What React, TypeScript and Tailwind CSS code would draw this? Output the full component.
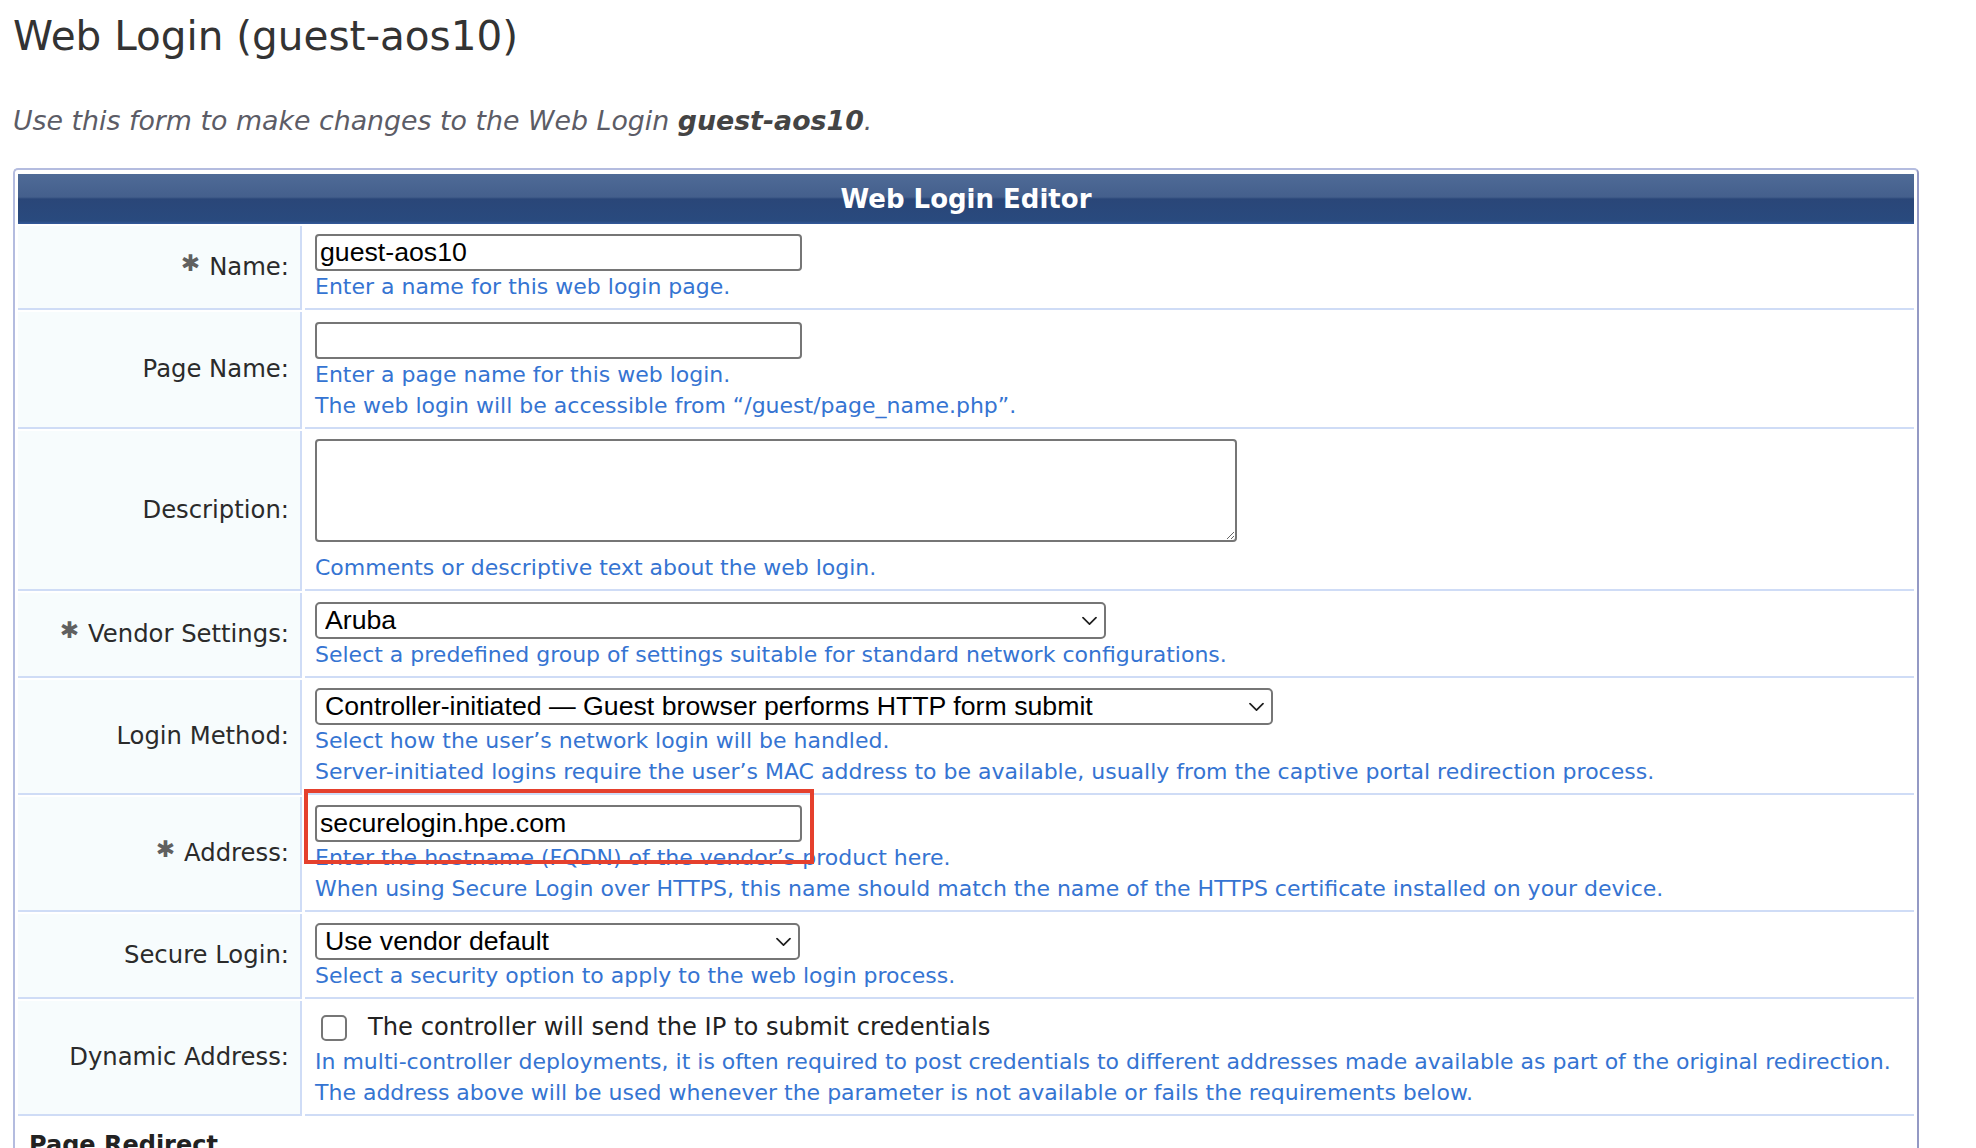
import React from "react";

const LABEL_FONT = "font-['DejaVu_Sans',Verdana,sans-serif]";
const INPUT_FONT = "font-['Liberation_Sans',Arial,sans-serif]";

const Chevron = () => (
  <svg
    className="pointer-events-none absolute right-[9px] top-1/2 -translate-y-1/2"
    width="15"
    height="9"
    viewBox="0 0 15 9"
    fill="none"
  >
    <path d="M1 1.2 L7.5 7.6 L14 1.2" stroke="#1f1f1f" strokeWidth="1.7" strokeLinecap="round" strokeLinejoin="round" />
  </svg>
);

const Select: React.FC<{ value: string; width: string }> = ({ value, width }) => (
  <div className={`relative ${width} h-[37px]`}>
    <select
      defaultValue={value}
      className={`appearance-none w-full h-full border-2 border-[#767676] rounded-[5px] bg-white pl-[8px] pr-[30px] text-[26.7px] leading-none text-black ${INPUT_FONT}`}
    >
      <option>{value}</option>
    </select>
    <Chevron />
  </div>
);

const TextInput: React.FC<{ value?: string }> = ({ value = "" }) => (
  <input
    type="text"
    defaultValue={value}
    className={`block w-[487px] h-[37px] border-2 border-[#767676] rounded-[4px] bg-white px-[3px] text-[26.7px] text-black ${INPUT_FONT}`}
  />
);

const Help: React.FC<{ children: React.ReactNode }> = ({ children }) => (
  <div className="text-[22px] leading-[31px] text-[#3574d2]">{children}</div>
);

const Row: React.FC<{
  label: string;
  required?: boolean;
  pt?: string;
  children: React.ReactNode;
  overlay?: React.ReactNode;
}> = ({ label, required, pt = "pt-[8px]", children, overlay }) => (
  <div className="flex gap-[3px]">
    <div className="w-[284px] shrink-0 flex items-center justify-end pr-[11px] bg-[#f7fcfd] border-r-2 border-b-2 border-[#cfdcf6] text-[24.3px] text-[#2b2b2b]">
      {required && <span className="text-[23px] leading-none text-[#606060] mr-[9px] relative top-[-4px]">✱</span>}
      <span>{label}:</span>
    </div>
    <div className={`relative flex-1 border-b-2 border-[#cfdcf6] pl-[10px] pb-[6px] ${pt}`}>
      {children}
      {overlay}
    </div>
  </div>
);

export default function App() {
  return (
    <div className={`min-h-screen bg-white pl-[13px] ${LABEL_FONT}`}>
      {/* Page heading */}
      <h1 className="mt-[12px] text-[40.5px] leading-[48px] text-[#333]">Web Login (guest-aos10)</h1>
      <p className="mt-[43px] text-[26.8px] leading-[36px] italic text-[#5c5c66]">
        Use this form to make changes to the Web Login <b className="font-bold text-[#444]">guest-aos10</b>.
      </p>

      {/* Editor panel */}
      <div className="mt-[29px] w-[1906px] border-2 border-[#b4bcdf] border-r-[#9499c4] rounded-t-[5px] px-[3px] pt-[4px]">
        <div className="h-[50px] flex items-center justify-center text-[26px] font-bold text-white bg-[linear-gradient(to_bottom,#4f6b97_0%,#445f8c_46%,#2a4678_50%,#294a7e_94%,#34599b_100%)]">
          Web Login Editor
        </div>

        <div className="mt-[2px] flex flex-col gap-[2px]">
          <Row label="Name" required>
            <TextInput value="guest-aos10" />
            <Help>Enter a name for this web login page.</Help>
          </Row>

          <Row label="Page Name" pt="pt-[10px]">
            <TextInput />
            <Help>Enter a page name for this web login.</Help>
            <Help>The web login will be accessible from “/guest/page_name.php”.</Help>
          </Row>

          <Row label="Description">
            <textarea className="block w-[922px] h-[103px] mb-[10px] border-2 border-[#767676] rounded-[4px] bg-white" />
            <Help>Comments or descriptive text about the web login.</Help>
          </Row>

          <Row label="Vendor Settings" required pt="pt-[9px]">
            <Select value="Aruba" width="w-[791px]" />
            <Help>Select a predefined group of settings suitable for standard network configurations.</Help>
          </Row>

          <Row label="Login Method">
            <Select value="Controller-initiated — Guest browser performs HTTP form submit" width="w-[958px]" />
            <Help>Select how the user’s network login will be handled.</Help>
            <Help>
              Server-initiated logins require the user’s MAC address to be available, usually from the captive portal
              redirection process.
            </Help>
          </Row>

          <Row
            label="Address"
            required
            overlay={<div className="absolute left-[-1px] top-[-8px] w-[510px] h-[75px] border-4 border-[#e5402d]" />}
          >
            <TextInput value="securelogin.hpe.com" />
            <Help>Enter the hostname (FQDN) of the vendor’s product here.</Help>
            <Help>When using Secure Login over HTTPS, this name should match the name of the HTTPS certificate installed on your device.</Help>
          </Row>

          <Row label="Secure Login" pt="pt-[9px]">
            <Select value="Use vendor default" width="w-[485px]" />
            <Help>Select a security option to apply to the web login process.</Help>
          </Row>

          <Row label="Dynamic Address" pt="pt-[8px]">
            <label className="flex items-center h-[37px]">
              <input
                type="checkbox"
                className="appearance-none ml-[6px] w-[26px] h-[26px] border-2 border-[#767676] rounded-[5px] bg-white"
              />
              <span className="ml-[21px] text-[24.2px] text-[#222]">The controller will send the IP to submit credentials</span>
            </label>
            <Help>
              In multi-controller deployments, it is often required to post credentials to different addresses made
              available as part of the original redirection.
            </Help>
            <Help>The address above will be used whenever the parameter is not available or fails the requirements below.</Help>
          </Row>
        </div>

        <div className="mt-[14px] pl-[11px] text-[24px] leading-[30px] font-bold text-[#222]">Page Redirect</div>
        <div className="h-[40px]" />
      </div>
    </div>
  );
}
